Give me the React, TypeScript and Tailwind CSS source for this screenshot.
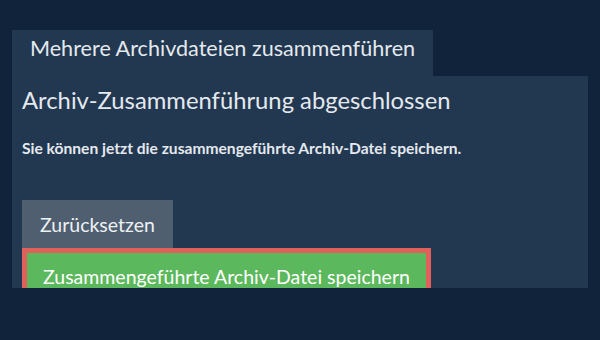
export default function App() {
  return (
    <div
      className="w-[600px] h-[340px] bg-[#10233a] overflow-hidden pt-[30px] px-[12px]"
      style={{ fontFamily: "Lato, 'Open Sans', sans-serif" }}
    >
      <div className="inline-block bg-[#223750] text-[#e4e9ee] text-[21.6px] leading-[24px] pt-[6px] pb-[16px] px-[18px]">
        Mehrere Archivdateien zusammenführen
      </div>
      <div className="bg-[#223750] h-[212px] overflow-hidden px-[10px] pt-[10px]">
        <h1 className="text-[#e4e9ee] text-[23.8px] leading-[28px] font-normal whitespace-nowrap">
          Archiv-Zusammenführung abgeschlossen
        </h1>
        <p className="text-[#e4e9ee] text-[15.6px] leading-[20px] font-bold mt-[24px] whitespace-nowrap">
          Sie können jetzt die zusammengeführte Archiv-Datei speichern.
        </p>
        <div className="mt-[42px] flex flex-col items-start">
          <button className="bg-[#4f5f70] text-[#eef1f4] text-[19.5px] leading-[27px] h-[48px] px-[18px] whitespace-nowrap">
            Zurücksetzen
          </button>
          <button className="bg-[#5cb85c] border-[5px] border-[#e0605a] text-white text-[19.5px] leading-[27px] h-[58px] pb-[2px] px-[16px] whitespace-nowrap">
            Zusammengeführte Archiv-Datei speichern
          </button>
        </div>
      </div>
    </div>
  );
}
